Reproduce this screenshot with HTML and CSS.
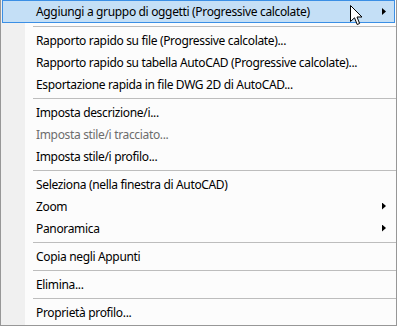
FILE: index.html
```html
<!DOCTYPE html>
<html lang="it">
<head>
  <meta charset="UTF-8">
  <title>Menu contestuale</title>
  <link rel="stylesheet" href="styles.css">
</head>
<body>
  <div class="menu">
    <div class="item active sub">Aggiungi a gruppo di oggetti (Progressive calcolate)</div>
    <div class="sep"></div>
    <div class="item">Rapporto rapido su file (Progressive calcolate)...</div>
    <div class="item">Rapporto rapido su tabella AutoCAD (Progressive calcolate)...</div>
    <div class="item">Esportazione rapida in file DWG 2D di AutoCAD...</div>
    <div class="sep"></div>
    <div class="item">Imposta descrizione/i...</div>
    <div class="item disabled">Imposta stile/i tracciato...</div>
    <div class="item">Imposta stile/i profilo...</div>
    <div class="sep"></div>
    <div class="item">Seleziona (nella finestra di AutoCAD)</div>
    <div class="item sub">Zoom</div>
    <div class="item sub">Panoramica</div>
    <div class="sep"></div>
    <div class="item">Copia negli Appunti</div>
    <div class="sep"></div>
    <div class="item">Elimina...</div>
    <div class="sep"></div>
    <div class="item">Proprietà profilo...</div>
  </div>

  <!-- mouse pointer over the hot item -->
  <svg class="cursor" width="13" height="21" viewBox="0 0 13 21">
    <path d="M0.5 0.5 L0.5 16.5 L4.5 12.8 L7.2 19.5 L9.6 18.5 L7 12 L12 12 Z" fill="#fff" stroke="#000" stroke-width="1" stroke-linejoin="miter"/>
  </svg>
</body>
</html>
```

FILE: styles.css
```css
body {
  margin: 0;
  background-color: #fff;
  font-family: "Segoe UI", "Noto Sans", sans-serif;
  font-size: 12px;
  letter-spacing: -0.34px;
  color: #000;
}

.menu {
  box-sizing: border-box;
  width: 397px;
  height: 326px;
  padding: 0 1px 1px;
  border: 1px solid #979797;
  border-top: none;
  background: linear-gradient(to right, #f0f0f0 24px, #fcfcfc 24px);
}

.item {
  display: flex;
  align-items: center;
  height: 22px;
  padding: 0 9px 0 34px;
  white-space: nowrap;
}

.item.active {
  box-sizing: border-box;
  height: 23px;
  margin-bottom: 1px;
  padding-left: 33px;
  padding-right: 8px;
  background-color: #c4dff6;
  border: 1px solid #3b8fe5;
}

.item.disabled {
  color: #6d6d6d;
}

.item.sub::after {
  content: "";
  margin-left: auto;
  width: 4px;
  height: 7px;
  background-color: #000;
  clip-path: polygon(0 0, 100% 50%, 0 100%);
}

.sep {
  height: 1px;
  margin: 3px -1px 2px 31px;
  background-color: #bdbdbd;
}

.cursor {
  position: absolute;
  left: 350px;
  top: 5px;
}
```
